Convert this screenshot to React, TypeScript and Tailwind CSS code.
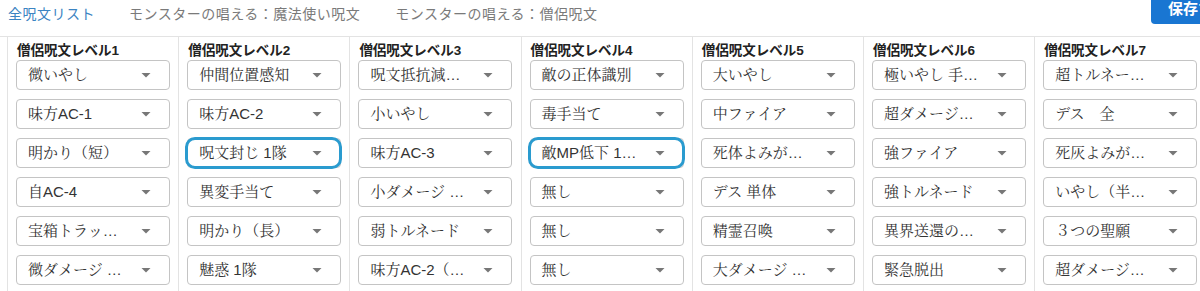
import React from "react";

const columns: { title: string; items: string[]; hl?: number }[] = [
  { title: "僧侶呪文レベル1", items: ["微いやし", "味方AC-1", "明かり（短）", "自AC-4", "宝箱トラッ…", "微ダメージ …"] },
  { title: "僧侶呪文レベル2", items: ["仲間位置感知", "味方AC-2", "呪文封じ 1隊", "異変手当て", "明かり（長）", "魅惑 1隊"], hl: 2 },
  { title: "僧侶呪文レベル3", items: ["呪文抵抗減…", "小いやし", "味方AC-3", "小ダメージ …", "弱トルネード", "味方AC-2（…"] },
  { title: "僧侶呪文レベル4", items: ["敵の正体識別", "毒手当て", "敵MP低下 1…", "無し", "無し", "無し"], hl: 2 },
  { title: "僧侶呪文レベル5", items: ["大いやし", "中ファイア", "死体よみが…", "デス 単体", "精霊召喚", "大ダメージ …"] },
  { title: "僧侶呪文レベル6", items: ["極いやし 手…", "超ダメージ…", "強ファイア", "強トルネード", "異界送還の…", "緊急脱出"] },
  { title: "僧侶呪文レベル7", items: ["超トルネー…", "デス　全", "死灰よみが…", "いやし（半…", "３つの聖願", "超ダメージ…"] },
];

const sans = { fontFamily: '"Liberation Sans", "Noto Sans CJK JP", sans-serif' };
const selFont = { fontFamily: '"Liberation Sans", "Noto Serif CJK JP", "Noto Sans CJK JP", serif' };

function Select({ text, highlight }: { text: string; highlight?: boolean }) {
  return (
    <div className="relative h-[30px] w-[154px] rounded-[4px] border border-[#c4c4c4] bg-white">
      <div
        className="flex h-full items-center whitespace-nowrap pl-[11px] text-[15px] text-[#333333]"
        style={selFont}
      >
        {text}
      </div>
      <svg
        className="absolute right-[11px] top-1/2 h-[24px] w-[24px] -translate-y-1/2 translate-x-1/2"
        viewBox="0 0 24 24"
        style={{ right: "23px" }}
      >
        <path d="M7.5 10l4.5 4.5 4.5-4.5z" fill="#777777" />
      </svg>
      {highlight && (
        <div className="absolute -bottom-[2px] -left-[3px] -right-[2px] -top-[2px] rounded-[10px] border-[3px] border-[#2a9bcf]" />
      )}
    </div>
  );
}

export default function App() {
  return (
    <div className="h-[291px] w-[1200px] overflow-hidden bg-white" style={sans}>
      <div className="flex h-[37px] w-[1240px] items-start border-b border-[#e3e3e3]">
        <div className="flex h-[28px] items-center pl-[8px] text-[14px] tracking-[0.5px]">
          <span className="text-[#3b84c2]">全呪文リスト</span>
          <span className="ml-[34px] text-[#7a7a7a]">モンスターの唱える：魔法使い呪文</span>
          <span className="ml-[35px] text-[#7a7a7a]">モンスターの唱える：僧侶呪文</span>
        </div>
        <div className="ml-auto -mt-[6px] flex h-[30px] w-[89px] items-center rounded-[4px] bg-[#1976d2] pl-[17px] text-[15px] font-bold text-white">
          保存する
        </div>
      </div>
      <div className="ml-[7px] grid grid-cols-[repeat(7,171.2px)]">
        {columns.map((c) => (
          <div key={c.title} className="flex h-[254px] flex-col border-l border-[#e3e3e3] pl-[8px] pt-[6px]">
            <div className="mb-[1px] h-[16px] pl-[1px] text-[13.5px] font-bold leading-[16px] text-[#222222]">
              {c.title}
            </div>
            <div className="flex flex-col gap-[9px]">
              {c.items.map((t, i) => (
                <Select key={i} text={t} highlight={c.hl === i} />
              ))}
            </div>
          </div>
        ))}
      </div>
    </div>
  );
}
